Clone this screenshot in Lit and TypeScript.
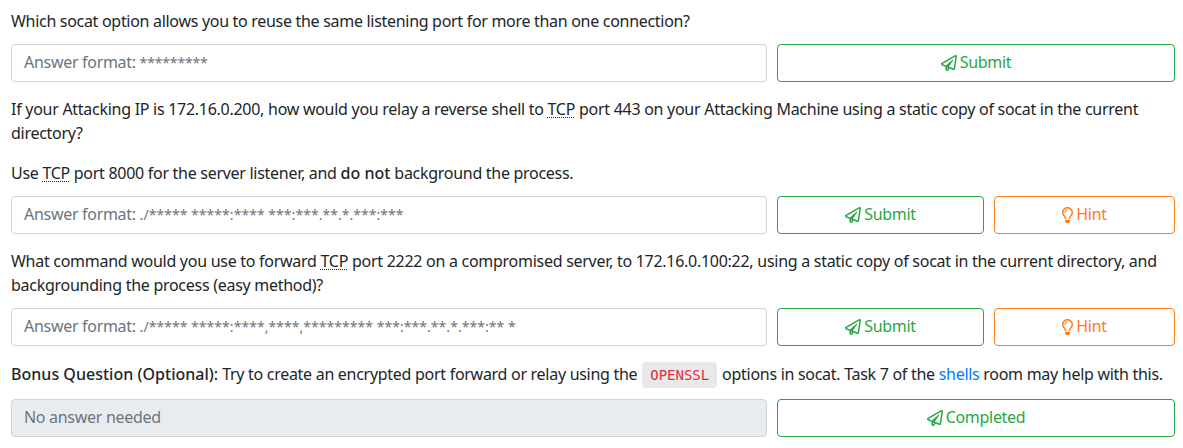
import { LitElement, html, css } from "lit";
import { customElement } from "lit/decorators.js";

const plane = html`<svg class="ico" viewBox="0 0 512 512"><path fill="currentColor" d="M440 6.5L24 246.4c-34.4 19.9-31.1 70.8 5.7 85.9L144 379.6V464c0 46.4 59.2 65.5 86.6 28.6l43.8-59.1 111.9 46.2c5.9 2.4 12.1 3.6 18.3 3.6 8.2 0 16.3-2.1 23.6-6.2 12.8-7.2 21.6-20 23.9-34.5l59.4-387.2c6.1-40.1-36.9-68.8-71.5-48.9zM192 464v-64.6l36.6 15.1L192 464zm212.6-28.7l-153.8-63.5L391 169.5c10.7-15.5-9.5-33.5-23.7-21.2L155.8 332.6 48 288 464 48l-59.4 387.3z"/></svg>`;
const bulb = html`<svg class="ico bulb" viewBox="0 0 352 512"><path fill="currentColor" d="M176 80c-52.94 0-96 43.06-96 96 0 8.84 7.16 16 16 16s16-7.16 16-16c0-35.3 28.72-64 64-64 8.84 0 16-7.16 16-16s-7.16-16-16-16zM96.06 459.17c0 3.15.93 6.22 2.68 8.84l24.51 36.84c2.97 4.46 7.97 7.14 13.32 7.14h78.85c5.36 0 10.36-2.68 13.32-7.14l24.51-36.84c1.74-2.62 2.67-5.7 2.68-8.84l.05-43.18H96.02l.04 43.18zM176 0C73.72 0 0 82.97 0 176c0 44.37 16.45 84.85 43.56 115.78 16.64 18.99 42.74 58.8 52.42 92.16v.06h48v-.12c-.01-4.77-.72-9.51-2.15-14.07-5.59-17.81-22.82-64.77-62.17-109.67-20.54-23.43-31.52-53.15-31.61-84.14-.2-73.64 59.67-128 127.95-128 70.58 0 128 57.42 128 128 0 30.97-11.24 60.85-31.65 84.14-39.11 44.61-56.42 91.47-62.1 109.46a47.507 47.507 0 0 0-2.22 14.3v.1h48v-.05c9.68-33.37 35.78-73.18 52.42-92.16C335.55 260.85 352 220.37 352 176 352 78.8 273.2 0 176 0z"/></svg>`;
const tcp = html`<abbr>TCP</abbr>`;
const answer = (mask: string, short = false) => html`Answer format: <span class="mask ${short ? "short" : ""}">${mask}</span>`;

@customElement("app-root")
export class AppRoot extends LitElement {
  static styles = css`
    :host { display: block; width: 1183px; height: 448px; overflow: hidden; background: #fff; box-sizing: border-box; padding: 9px 8px 0 11px;
      font-family: "Noto Sans", sans-serif; font-size: 16px; letter-spacing: -0.3px; line-height: 24px; color: #212529; }
    p { margin: 0; }
    .q { margin-top: 15px; letter-spacing: -0.275px; }
    .q2 { margin-top: 16px; letter-spacing: -0.285px; }
    .row { display: grid; grid-template-columns: 756px 1fr; column-gap: 10px; margin-top: 11px; }
    .row.bonus { margin-top: 13px; }
    .btns { display: flex; gap: 10px; }
    .field { box-sizing: border-box; height: 38px; border: 1px solid #ced4da; border-radius: 4px; padding: 0 12px 2px; display: block; line-height: 34px; color: #6c757d; white-space: nowrap; }
    .field.off { background: #e9ecef; }
    .mask { font-size: 14px; letter-spacing: 0.04px; }
    .mask.short { letter-spacing: -0.15px; }
    .btn { box-sizing: border-box; height: 38px; flex: 1 1 0; border: 1px solid #28a745; border-radius: 4px; padding-bottom: 2px; color: #28a745; display: flex; align-items: center; justify-content: center; gap: 3px; }
    .btn.submit { flex: 0 0 207px; }
    .btn.hint { border-color: #fd7e14; color: #fd7e14; }
    .ico { width: 16px; height: 16px; flex: none; margin-top: 2px; }
    .ico.bulb { width: 11px; }
    abbr { text-decoration: underline dotted 1px; text-underline-offset: 2px; }
    strong { font-weight: 500; letter-spacing: 0.02px; }
    code { font-family: "DejaVu Sans Mono", monospace; font-size: 14px; line-height: 1; letter-spacing: 0; color: #dc2f3c; background: #e9e9eb; border-radius: 4px; padding: 5px 8px; margin: 0 1px; }
    a { color: #007bff; text-decoration: none; }
  `;

  render() {
    return html`
      <p>Which socat option allows you to reuse the same listening port for more than one connection?</p>
      <div class="row"><div class="field">${answer("*********", true)}</div><div class="btns"><div class="btn">${plane}Submit</div></div></div>

      <p class="q">If your Attacking IP is 172.16.0.200, how would you relay a reverse shell to ${tcp} port 443 on your Attacking Machine using a static copy of socat in the current directory?</p>
      <p class="q2">Use ${tcp} port 8000 for the server listener, and <strong>do not</strong> background the process.</p>
      <div class="row"><div class="field">${answer("./***** *****:**** ***:***.**.*.***:***")}</div><div class="btns"><div class="btn submit">${plane}Submit</div><div class="btn hint">${bulb}Hint</div></div></div>

      <p class="q">What command would you use to forward ${tcp} port 2222 on a compromised server, to 172.16.0.100:22, using a static copy of socat in the current directory, and backgrounding the process (easy method)?</p>
      <div class="row"><div class="field">${answer("./***** *****:****,****,********* ***:***.**.*.***:** *")}</div><div class="btns"><div class="btn submit">${plane}Submit</div><div class="btn hint">${bulb}Hint</div></div></div>

      <p class="q2"><strong>Bonus Question (Optional):</strong> Try to create an encrypted port forward or relay using the <code>OPENSSL</code> options in socat. Task 7 of the <a href="#">shells</a> room may help with this.</p>
      <div class="row bonus"><div class="field off">No answer needed</div><div class="btns"><div class="btn">${plane}Completed</div></div></div>
    `;
  }
}
